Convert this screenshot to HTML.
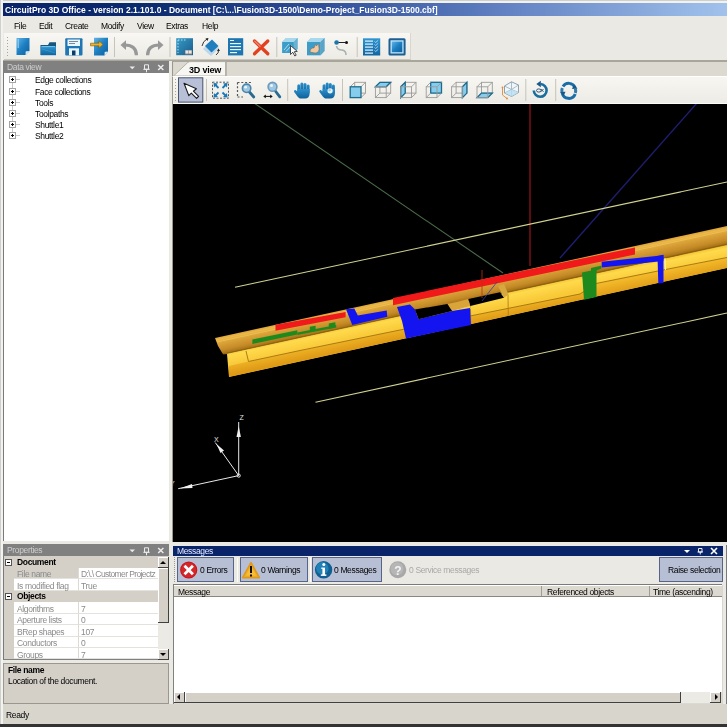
<!DOCTYPE html>
<html><head><meta charset="utf-8">
<style>
*{margin:0;padding:0;box-sizing:border-box}
html,body{width:727px;height:727px;overflow:hidden;background:#ebe9e3;font-family:"Liberation Sans",sans-serif;font-size:8.5px;letter-spacing:-0.35px;color:#000}
.a{position:absolute}
.t{position:absolute;white-space:nowrap;line-height:1;will-change:transform}
</style></head><body>
<!-- outer frame -->
<div class="a" style="left:0;top:0;width:727px;height:3px;background:#f2f2f0;border-top:1px solid #cfcfcc"></div>
<div class="a" style="left:0;top:0;width:3px;height:727px;background:#f2f2f0;border-left:1px solid #cfcfcc"></div>
<!-- title bar -->
<div class="a" style="left:3px;top:3px;width:724px;height:13px;background:linear-gradient(90deg,#0a246a 0%,#0c2a6e 20%,#2e4c94 42%,#5878bc 65%,#a2c2ec 100%)"></div>
<div class="t" style="left:5px;top:5.8px;font-weight:bold;color:#fff;font-size:8.5px;letter-spacing:0">CircuitPro 3D Office - version 2.1.101.0 - Document [C:\...\Fusion3D-1500\Demo-Project_Fusion3D-1500.cbf]</div>
<!-- menu -->
<div class="a" style="left:3px;top:16px;width:724px;height:16px;background:#ebe9e3"></div>
<div class="t" style="left:14px;top:21.7px">File</div>
<div class="t" style="left:39px;top:21.7px">Edit</div>
<div class="t" style="left:65px;top:21.7px">Create</div>
<div class="t" style="left:101px;top:21.7px">Modify</div>
<div class="t" style="left:137px;top:21.7px">View</div>
<div class="t" style="left:166px;top:21.7px">Extras</div>
<div class="t" style="left:202px;top:21.7px">Help</div>
<!-- toolbar -->
<div class="a" style="left:4px;top:33px;width:407px;height:27px;background:linear-gradient(#f8f7f3,#ecebe5);border-right:1px solid #d8d6cf;border-bottom:1px solid #c9c6bc"></div>
<div class="a" style="left:3px;top:60px;width:724px;height:1px;background:#a9a69c"></div>

<!-- main toolbar icons -->
<svg class="a" style="left:0;top:30px" width="420" height="31" viewBox="0 30 420 31">
<defs>
<linearGradient id="bl" x1="0" y1="0" x2="1" y2="1"><stop offset="0" stop-color="#5fb4e6"/><stop offset="0.5" stop-color="#1c7fc2"/><stop offset="1" stop-color="#0f5e9c"/></linearGradient>
<linearGradient id="bl2" x1="0" y1="0" x2="0" y2="1"><stop offset="0" stop-color="#2f96d2"/><stop offset="1" stop-color="#11659f"/></linearGradient>
<linearGradient id="tl" x1="0" y1="0" x2="1" y2="1"><stop offset="0" stop-color="#3a9cc8"/><stop offset="1" stop-color="#185c8a"/></linearGradient>
</defs>
<!-- grip -->
<g fill="#a8a59c">
<rect x="7" y="37" width="1" height="1"/><rect x="7" y="40" width="1" height="1"/><rect x="7" y="43" width="1" height="1"/><rect x="7" y="46" width="1" height="1"/><rect x="7" y="49" width="1" height="1"/><rect x="7" y="52" width="1" height="1"/><rect x="7" y="55" width="1" height="1"/>
</g>
<!-- new -->
<path d="M16.5,38 H29.5 V51 L25.5,55 H16.5 Z" fill="url(#bl)"/>
<path d="M25.5,55 L25.7,51.5 Q26,51 29.5,51 Z" fill="#d8f0ff"/>
<rect x="17.5" y="39" width="1.5" height="9" fill="#9bd4f4" opacity="0.7"/>
<!-- open folder -->
<path d="M40.5,45 H48 L49.5,42.3 H56 V55 H40.5 Z" fill="#16557e"/>
<path d="M40.8,46.3 H56 V55.2 H40.8 Z" fill="url(#bl2)"/>
<path d="M41.5,46.6 H55" stroke="#7fd0f4" stroke-width="0.9"/>
<path d="M42,49 L55,53" stroke="#4aa8e0" stroke-width="0.7" opacity="0.6"/>
<!-- save -->
<rect x="65.2" y="38.2" width="17.3" height="17.2" rx="1" fill="#1f76b4"/>
<rect x="67.5" y="39.5" width="12.5" height="6.5" fill="#e8f6ff"/>
<rect x="69" y="41" width="9" height="1" fill="#7a8a98"/><rect x="69" y="43" width="6" height="1" fill="#7a8a98"/>
<rect x="69" y="48.3" width="10" height="7" fill="#e8f6ff"/>
<rect x="72" y="50.5" width="3.5" height="4.8" fill="#0d3c66"/>
<!-- import -->
<path d="M94,37.8 H108 V51.5 L104.5,55.4 H94 Z" fill="url(#bl)"/>
<path d="M104.5,55.4 L104.7,52 Q105,51.5 108,51.5 Z" fill="#d8f0ff"/>
<path d="M90.5,43.2 H99 V40.8 L103,44.5 L99,48.2 V45.8 H90.5 Z" fill="#f0b020" stroke="#7a5a10" stroke-width="0.6"/>
<!-- sep -->
<rect x="114" y="37" width="1" height="20" fill="#c6c3ba"/>
<!-- undo/redo -->
<path d="M136.4,55.3 C136.4,48 132,45 124.5,45" stroke="#989898" stroke-width="3.2" fill="none"/>
<polygon points="120.5,45 126,40.3 126,50" fill="#989898"/>
<path d="M147.6,55.3 C147.6,48 152,45 159.5,45" stroke="#989898" stroke-width="3.2" fill="none"/>
<polygon points="163.5,45 158,40.3 158,50" fill="#989898"/>
<rect x="169.5" y="37" width="1" height="20" fill="#c6c3ba"/>
<!-- icon 7 -->
<rect x="176.2" y="38.2" width="16.8" height="17" fill="url(#tl)"/>
<path d="M178,40 V53 M178,40 H186" stroke="#a8e4f8" stroke-width="1" stroke-dasharray="1.5,1.5"/>
<rect x="185" y="50" width="7" height="4.5" fill="#8a8a8a"/><rect x="185.5" y="50.5" width="2.8" height="3" fill="#e8e8e8"/><rect x="188.8" y="50.5" width="2.8" height="3" fill="#e8e8e8"/>
<!-- icon 8 rotate -->
<path d="M203,49 L211,41 L219,48 L211,56 Z" fill="#9cc8e6" opacity="0.6"/>
<path d="M205,46 L212,39.5 L218.5,46 L211.5,52.5 Z" fill="#1f7fbf"/>
<path d="M202,46 Q203,41 207,39" stroke="#222" stroke-width="0.9" fill="none"/><polygon points="208.5,38 205.5,38.5 207.5,41" fill="#222"/>
<path d="M216,55 Q219,53 218.5,50" stroke="#222" stroke-width="0.9" fill="none"/><polygon points="218.5,48.5 217,51 220,51" fill="#222"/>
<!-- icon 9 list -->
<rect x="228" y="38.2" width="15.2" height="17.2" fill="#1d76b0"/>
<g fill="#e6f6ff"><rect x="230" y="40" width="4" height="1"/><rect x="230" y="43" width="11" height="1.2"/><rect x="230" y="46" width="11" height="1.2"/><rect x="230" y="49" width="11" height="1.2"/><rect x="230" y="52" width="7" height="1.2"/></g>
<!-- red x -->
<path d="M254.5,41 L267.8,53.8 M267.8,41 L254.5,53.8" stroke="#e2401e" stroke-width="3.3" stroke-linecap="round"/>
<path d="M254.8,41.3 L260,46.3" stroke="#f59a8a" stroke-width="1.5" stroke-linecap="round" opacity="0.7"/>
<rect x="276.3" y="37" width="1" height="20" fill="#c6c3ba"/>
<!-- cube cursor -->
<path d="M282.2,42 L286,38 H297.6 V49 L293.8,53 H282.2 Z" fill="#7cc0dc"/>
<rect x="282.2" y="42" width="11.6" height="11" fill="#3d9cc8"/>
<path d="M286,38 H297.6 L293.8,42 H282.2 Z" fill="#a8d8ec"/>
<path d="M293.8,42 L297.6,38 V49 L293.8,53 Z" fill="#6ab0d0"/>
<path d="M284,50 L289,44 M286,51.5 L291.5,45.5" stroke="#c8ecfa" stroke-width="0.8"/>
<path d="M290.5,45.5 L290.5,54.5 L292.8,52.3 L294.8,56 L296.2,55.2 L294.3,51.7 L297.3,51.4 Z" fill="#fff" stroke="#222" stroke-width="0.8"/>
<!-- cube hand -->
<path d="M307,42 L311,38 H324.5 V51 L320.5,55.2 H307 Z" fill="#7cc0dc"/>
<rect x="307" y="42" width="13.5" height="13.2" fill="#3d9cc8"/>
<path d="M311,38 H324.5 L320.5,42 H307 Z" fill="#a8d8ec"/>
<path d="M320.5,42 L324.5,38 V51 L320.5,55.2 Z" fill="#5aa4c8"/>
<path d="M310,52 C310,49 312,47.5 314,48 L315,45.5 C315.5,44.5 316.8,44.8 316.5,46 L317.5,44.5 C318,43.8 319,44.2 318.6,45.2 L319,48 C319.5,50.5 318,53 315,53 Z" fill="#f2c8a0" stroke="#8a6040" stroke-width="0.5"/>
<!-- path icon -->
<path d="M336.6,46 Q337,50 342,50 Q346,50.5 346,55" stroke="#a8b0b0" stroke-width="1.6" fill="none"/>
<line x1="337" y1="42.5" x2="345" y2="42.5" stroke="#222" stroke-width="1"/>
<circle cx="336.6" cy="42.5" r="2.3" fill="#1d76a8"/>
<circle cx="346.5" cy="42.5" r="1.5" fill="#111"/>
<rect x="356.7" y="37" width="1" height="20" fill="#c6c3ba"/>
<!-- checklist -->
<rect x="363" y="38.3" width="17.2" height="17.2" fill="url(#bl2)"/>
<g fill="#e6f6ff"><rect x="365" y="40.5" width="8" height="1.2"/><rect x="365" y="43.5" width="8" height="1.2"/><rect x="365" y="46.5" width="8" height="1.2"/><rect x="365" y="49.5" width="8" height="1.2"/><rect x="365" y="52.5" width="8" height="1.2"/></g>
<path d="M374.5,41.5 l1.2,1 l2.5,-2.2 M374.5,44.5 l1.2,1 l2.5,-2.2 M374.5,47.5 l1.2,1 l2.5,-2.2 M374.5,50.5 l1.2,1 l2.5,-2.2" stroke="#d8f0ff" stroke-width="0.7" fill="none"/>
<!-- frame -->
<rect x="388.5" y="38.3" width="17.1" height="17.2" rx="1.5" fill="#1e5e92"/>
<rect x="390.5" y="40.3" width="13.1" height="13.2" fill="#bfe6fa" />
<rect x="391.8" y="41.6" width="10.5" height="10.6" fill="url(#bl)"/>
</svg>
<!-- Data view panel -->
<div class="a" style="left:3px;top:61px;width:166px;height:12px;background:#808080"></div>
<div class="t" style="left:7px;top:63px;color:#cdcdcd">Data view</div>
<svg class="a" style="left:125px;top:61px" width="44" height="12" viewBox="125 61 44 12">
<polygon points="129.5,66.5 135,66.5 132.25,69.3" fill="#ececec"/>
<path d="M144.5,64.8 h4 v4.5 h-4z M143.3,69.3 h6.4 M146.5,69.3 v3" stroke="#ececec" stroke-width="1" fill="none"/>
<path d="M158.2,65 l5.2,5 M163.4,65 l-5.2,5" stroke="#ececec" stroke-width="1.5"/>
</svg>

<div class="a" style="left:3px;top:73px;width:166px;height:468px;background:#fff;border-left:1px solid #7a7a7a"></div>
<div class="a" style="left:169px;top:61px;width:3px;height:481px;background:#ebe9e3"></div>
<!-- tree -->
<div class="a" style="left:9px;top:76.4px;width:7px;height:7px;border:1px solid #a4a4a4;background:#fff"></div><div class="a" style="left:11px;top:79.4px;width:3px;height:1px;background:#000"></div><div class="a" style="left:12px;top:78.4px;width:1px;height:3px;background:#000"></div><div class="a" style="left:16px;top:79.4px;width:4px;height:1px;background:#c8c8c8"></div><div class="a" style="left:12px;top:83.4px;width:1px;height:4.2px;background:#c8c8c8"></div><div class="t" style="left:35px;top:76.4px">Edge collections</div>
<div class="a" style="left:9px;top:87.6px;width:7px;height:7px;border:1px solid #a4a4a4;background:#fff"></div><div class="a" style="left:11px;top:90.6px;width:3px;height:1px;background:#000"></div><div class="a" style="left:12px;top:89.6px;width:1px;height:3px;background:#000"></div><div class="a" style="left:16px;top:90.6px;width:4px;height:1px;background:#c8c8c8"></div><div class="a" style="left:12px;top:94.6px;width:1px;height:4.2px;background:#c8c8c8"></div><div class="t" style="left:35px;top:87.6px">Face collections</div>
<div class="a" style="left:9px;top:98.8px;width:7px;height:7px;border:1px solid #a4a4a4;background:#fff"></div><div class="a" style="left:11px;top:101.8px;width:3px;height:1px;background:#000"></div><div class="a" style="left:12px;top:100.8px;width:1px;height:3px;background:#000"></div><div class="a" style="left:16px;top:101.8px;width:4px;height:1px;background:#c8c8c8"></div><div class="a" style="left:12px;top:105.8px;width:1px;height:4.2px;background:#c8c8c8"></div><div class="t" style="left:35px;top:98.8px">Tools</div>
<div class="a" style="left:9px;top:110.0px;width:7px;height:7px;border:1px solid #a4a4a4;background:#fff"></div><div class="a" style="left:11px;top:113.0px;width:3px;height:1px;background:#000"></div><div class="a" style="left:12px;top:112.0px;width:1px;height:3px;background:#000"></div><div class="a" style="left:16px;top:113.0px;width:4px;height:1px;background:#c8c8c8"></div><div class="a" style="left:12px;top:117.0px;width:1px;height:4.2px;background:#c8c8c8"></div><div class="t" style="left:35px;top:110.0px">Toolpaths</div>
<div class="a" style="left:9px;top:121.2px;width:7px;height:7px;border:1px solid #a4a4a4;background:#fff"></div><div class="a" style="left:11px;top:124.2px;width:3px;height:1px;background:#000"></div><div class="a" style="left:12px;top:123.2px;width:1px;height:3px;background:#000"></div><div class="a" style="left:16px;top:124.2px;width:4px;height:1px;background:#c8c8c8"></div><div class="a" style="left:12px;top:128.2px;width:1px;height:4.2px;background:#c8c8c8"></div><div class="t" style="left:35px;top:121.2px">Shuttle1</div>
<div class="a" style="left:9px;top:132.4px;width:7px;height:7px;border:1px solid #a4a4a4;background:#fff"></div><div class="a" style="left:11px;top:135.4px;width:3px;height:1px;background:#000"></div><div class="a" style="left:12px;top:134.4px;width:1px;height:3px;background:#000"></div><div class="a" style="left:16px;top:135.4px;width:4px;height:1px;background:#c8c8c8"></div><div class="t" style="left:35px;top:132.4px">Shuttle2</div>


<!-- 3D panel -->
<div class="a" style="left:172px;top:61px;width:555px;height:15px;background:#d9d6cd;border-left:1px solid #9a978e;border-top:1px solid #a8a59b"></div>
<svg class="a" style="left:172px;top:61px" width="60" height="16" viewBox="172 61 60 16">
<path d="M173.5,76 L188,62.3 Q189.5,61.6 191,61.6 H225.5 V76 Z" fill="#f7f6f2" stroke="#a8a59b" stroke-width="0.8"/>
<path d="M174,62 L187,62 L174,75 Z" fill="#dedbd2" opacity="0.6"/>
</svg>
<div class="a" style="left:226px;top:62px;width:501px;height:14px;background:#dcd9d0;border-left:1px solid #b8b5ac"></div>
<div class="t" style="left:189.3px;top:66.2px;font-weight:bold;font-size:9px;letter-spacing:-0.2px">3D view</div>
<div class="a" style="left:172px;top:76px;width:555px;height:27px;background:linear-gradient(#f7f6f2,#edebe5);border-left:1px solid #9a978e;border-top:1px solid #fff"></div>
<svg class="a" style="left:172px;top:76px" width="555" height="27" viewBox="172 76 555 27">
<defs>
<linearGradient id="hb" x1="0" y1="0" x2="0" y2="1"><stop offset="0" stop-color="#2a90cc"/><stop offset="1" stop-color="#0f5f98"/></linearGradient>
</defs>
<g fill="#a8a59c"><rect x="175" y="79" width="1" height="1"/><rect x="175" y="82" width="1" height="1"/><rect x="175" y="85" width="1" height="1"/><rect x="175" y="88" width="1" height="1"/><rect x="175" y="91" width="1" height="1"/><rect x="175" y="94" width="1" height="1"/><rect x="175" y="97" width="1" height="1"/><rect x="175" y="100" width="1" height="1"/></g>
<rect x="178.5" y="77.8" width="24.3" height="24.3" fill="#b8c0d8" stroke="#46546e" stroke-width="1"/>
<path d="M184,83.2 L196.4,88.8 L193.4,91.2 L198.6,96.4 L196.6,98.4 L191.3,93.2 L188.8,95.6 Z" fill="#fff" stroke="#1a1a1a" stroke-width="1.1" stroke-linejoin="round"/>
<rect x="206" y="79" width="1" height="22" fill="#c6c3ba"/>
<!-- fit -->
<rect x="212.5" y="82.2" width="16" height="16" fill="none" stroke="#555" stroke-width="1" stroke-dasharray="2,1.5"/>
<g stroke="#1a78b8" stroke-width="1.8" fill="#1a78b8">
<path d="M218.5,88 L214.5,84"/><path d="M222.5,88 L226.5,84"/><path d="M218.5,92.5 L214.5,96.5"/><path d="M222.5,92.5 L226.5,96.5"/>
</g>
<g fill="#1a78b8"><polygon points="213.5,83 218,83.5 214,87.5"/><polygon points="227.5,83 223,83.5 227,87.5"/><polygon points="213.5,97.5 218,97 214,93"/><polygon points="227.5,97.5 223,97 227,93"/></g>
<!-- zoom window -->
<path d="M237.5,82.5 V97 M237.5,82.5 H251 M237.5,97 H243" stroke="#555" stroke-width="1.2" stroke-dasharray="2,1.8" fill="none"/>
<path d="M249,91.5 L253.8,97" stroke="#2a6a90" stroke-width="2.8" stroke-linecap="round"/>
<circle cx="246.6" cy="88.3" r="4.2" fill="#9cc8e4" stroke="#4f84a8" stroke-width="1.6"/>
<circle cx="245.6" cy="87.2" r="1.4" fill="#e8f6ff"/>
<!-- zoom -->
<path d="M275,90.5 L279.8,96.8" stroke="#2a6a90" stroke-width="2.8" stroke-linecap="round"/>
<circle cx="272.5" cy="86.8" r="4.4" fill="#9cc8e4" stroke="#6f9ab8" stroke-width="1.6"/>
<circle cx="271.5" cy="85.6" r="1.5" fill="#e8f6ff"/>
<path d="M264.5,96.4 H271.5" stroke="#111" stroke-width="1"/>
<polygon points="263.3,96.4 265.8,94.6 265.8,98.2" fill="#111"/><polygon points="272.7,96.4 270.2,94.6 270.2,98.2" fill="#111"/>
<rect x="287.2" y="79" width="1" height="22" fill="#c6c3ba"/>
<!-- hands -->
<g transform="translate(0.0,0)" fill="url(#hb)"><rect x="297.3" y="84.2" width="3" height="9" rx="1.5"/><rect x="300.4" y="82.6" width="3" height="10" rx="1.5"/><rect x="303.5" y="83" width="3" height="10" rx="1.5"/><rect x="306.6" y="84.6" width="3" height="9" rx="1.5"/><path d="M297.3,89 H309.6 V93.5 C309.6,96.5 308,98.6 305,98.6 H301 C299.5,98.6 298.5,97.8 297.5,96.5 L294.2,92 C293.5,91 294.5,89.6 295.8,90.2 L297.5,91.5 Z"/></g>
<g transform="translate(25.3,0)" fill="url(#hb)"><rect x="297.3" y="84.2" width="3" height="9" rx="1.5"/><rect x="300.4" y="82.6" width="3" height="10" rx="1.5"/><rect x="303.5" y="83" width="3" height="10" rx="1.5"/><rect x="306.6" y="84.6" width="3" height="9" rx="1.5"/><path d="M297.3,89 H309.6 V93.5 C309.6,96.5 308,98.6 305,98.6 H301 C299.5,98.6 298.5,97.8 297.5,96.5 L294.2,92 C293.5,91 294.5,89.6 295.8,90.2 L297.5,91.5 Z"/><circle cx="304.8" cy="90.8" r="2.6" fill="#e4f4fb"/><circle cx="304.3" cy="90.3" r="1.2" fill="#a8d0e4"/></g>
<rect x="342" y="79" width="1" height="22" fill="#c6c3ba"/>
<rect x="354.7" y="82.3" width="10.8" height="10.8" fill="none" stroke="#9a9a9a" stroke-width="0.9"/><path d="M350.2,86.8 L354.7,82.3 M361.0,86.8 L365.5,82.3 M361.0,97.6 L365.5,93.1 M350.2,97.6 L354.7,93.1" stroke="#9a9a9a" stroke-width="0.9"/><rect x="350.2" y="86.8" width="10.8" height="10.8" fill="#86ccec" stroke="#1d6a8c" stroke-width="1.3"/>
<rect x="379.9" y="82.3" width="10.8" height="10.8" fill="none" stroke="#9a9a9a" stroke-width="0.9"/><path d="M375.4,86.8 L379.9,82.3 M386.2,86.8 L390.7,82.3 M386.2,97.6 L390.7,93.1 M375.4,97.6 L379.9,93.1" stroke="#9a9a9a" stroke-width="0.9"/><polygon points="375.4,86.8 379.9,82.3 390.7,82.3 386.2,86.8" fill="#86ccec" stroke="#1d6a8c" stroke-width="1.3"/><rect x="375.4" y="86.8" width="10.8" height="10.8" fill="none" stroke="#9a9a9a" stroke-width="0.9"/>
<rect x="405.2" y="82.3" width="10.8" height="10.8" fill="none" stroke="#9a9a9a" stroke-width="0.9"/><path d="M400.7,86.8 L405.2,82.3 M411.5,86.8 L416.0,82.3 M411.5,97.6 L416.0,93.1 M400.7,97.6 L405.2,93.1" stroke="#9a9a9a" stroke-width="0.9"/><polygon points="400.7,86.8 405.2,82.3 405.2,93.1 400.7,97.6" fill="#86ccec" stroke="#1d6a8c" stroke-width="1.3"/><rect x="400.7" y="86.8" width="10.8" height="10.8" fill="none" stroke="#9a9a9a" stroke-width="0.9"/>
<rect x="430.7" y="82.3" width="10.8" height="10.8" fill="#86ccec" stroke="#1d6a8c" stroke-width="1.3"/><path d="M426.2,86.8 L430.7,82.3 M437.0,86.8 L441.5,82.3 M437.0,97.6 L441.5,93.1 M426.2,97.6 L430.7,93.1" stroke="#9a9a9a" stroke-width="0.9"/><rect x="426.2" y="86.8" width="10.8" height="10.8" fill="none" stroke="#9a9a9a" stroke-width="0.9"/>
<rect x="456.1" y="82.3" width="10.8" height="10.8" fill="none" stroke="#9a9a9a" stroke-width="0.9"/><path d="M451.6,86.8 L456.1,82.3 M462.40000000000003,86.8 L466.90000000000003,82.3 M462.40000000000003,97.6 L466.90000000000003,93.1 M451.6,97.6 L456.1,93.1" stroke="#9a9a9a" stroke-width="0.9"/><polygon points="462.40000000000003,86.8 466.90000000000003,82.3 466.90000000000003,93.1 462.40000000000003,97.6" fill="#86ccec" stroke="#1d6a8c" stroke-width="1.3"/><rect x="451.6" y="86.8" width="10.8" height="10.8" fill="none" stroke="#9a9a9a" stroke-width="0.9"/>
<rect x="481.5" y="82.3" width="10.8" height="10.8" fill="none" stroke="#9a9a9a" stroke-width="0.9"/><path d="M477.0,86.8 L481.5,82.3 M487.8,86.8 L492.3,82.3 M487.8,97.6 L492.3,93.1 M477.0,97.6 L481.5,93.1" stroke="#9a9a9a" stroke-width="0.9"/><polygon points="477.0,97.6 481.5,93.1 492.3,93.1 487.8,97.6" fill="#86ccec" stroke="#1d6a8c" stroke-width="1.3"/><rect x="477.0" y="86.8" width="10.8" height="10.8" fill="none" stroke="#9a9a9a" stroke-width="0.9"/>
<!-- iso cube -->
<path d="M504.5,86 L511.5,81.8 L518.5,85 L518.5,92.5 L511.5,96.5 L504.5,93 Z" fill="#eef6fa" stroke="#8696a0" stroke-width="0.9"/>
<path d="M504.5,86 L511.5,89.5 L518.5,85 M511.5,89.5 V96.5 M504.5,93 L511.5,89.5 M511.5,81.8 V89.5 M518.5,92.5 L511.5,89.5" stroke="#8fa4b0" stroke-width="0.7" fill="none"/>
<path d="M504.5,93 L511.5,96.5 L518.5,92.5 L511.5,89.5 Z" fill="#b8e0f2" opacity="0.8"/>
<path d="M502.5,87.5 V95 L507,98.5" stroke="#e08a3a" stroke-width="0.9" fill="none"/>
<circle cx="502.5" cy="87.5" r="0.9" fill="#e08a3a"/><circle cx="507" cy="98.5" r="0.9" fill="#e08a3a"/>
<rect x="525.3" y="79" width="1" height="22" fill="#c6c3ba"/>
<!-- rotate -->
<path d="M533.8,90.5 A6.4,6.4 0 1 0 540.5,84" stroke="#1a6e9e" stroke-width="2.6" fill="none"/>
<polygon points="536.3,84 540.8,80.8 540.8,87.2" fill="#1a5a88"/>
<ellipse cx="538.8" cy="90.5" rx="2.3" ry="1.6" fill="none" stroke="#1a4a70" stroke-width="0.9"/>
<path d="M540.8,89 L543.5,91.8 M540.8,91.8 L543.5,89" stroke="#1a4a70" stroke-width="0.9"/>
<rect x="555.2" y="79" width="1" height="22" fill="#c6c3ba"/>
<!-- refresh -->
<path d="M563,86.5 A6.8,6.8 0 0 1 575,87.5" stroke="#1a6ea8" stroke-width="3" fill="none"/>
<path d="M575.2,94 A6.8,6.8 0 0 1 562.2,93" stroke="#1a6ea8" stroke-width="3" fill="none"/>
<path d="M562,92 A6.8,6.8 0 0 1 562.3,88" stroke="#1a6ea8" stroke-width="3" fill="none" opacity="0.9"/>
<path d="M575.3,88.5 A6.8,6.8 0 0 1 575.3,93" stroke="#1a6ea8" stroke-width="3" fill="none" opacity="0.9"/>
<polygon points="574,84.5 577.5,88.5 572,89" fill="#15588a"/>
<polygon points="563.5,96 560,92 565.5,91.8" fill="#15588a"/>
</svg>
<div class="a" style="left:172px;top:103px;width:555px;height:1px;background:#fbfbf8;border-left:1px solid #9a978e"></div>
<div class="a" style="left:172px;top:104px;width:555px;height:438px;background:#000;border-left:1px solid #9a978e"></div>
<!-- 3D scene -->
<svg class="a" style="left:173px;top:104px" width="554" height="438" viewBox="173 104 554 438">
<defs>
<linearGradient id="topf" gradientUnits="userSpaceOnUse" x1="470" y1="282.1" x2="473.85" y2="299.75">
<stop offset="0" stop-color="#d9a23a"/>
<stop offset="0.14" stop-color="#ecba4a"/>
<stop offset="0.3" stop-color="#dea63c"/>
<stop offset="0.5" stop-color="#d39a32"/>
<stop offset="0.75" stop-color="#c48a28"/>
<stop offset="0.92" stop-color="#ae7618"/>
<stop offset="1" stop-color="#885a0e"/>
</linearGradient>
<linearGradient id="cyl" gradientUnits="userSpaceOnUse" x1="470" y1="300" x2="473" y2="314">
<stop offset="0" stop-color="#f4c434"/>
<stop offset="0.25" stop-color="#ffda4c"/>
<stop offset="1" stop-color="#f8c838"/>
</linearGradient>
<linearGradient id="low" gradientUnits="userSpaceOnUse" x1="470" y1="312" x2="472.5" y2="324">
<stop offset="0" stop-color="#f2b82a"/>
<stop offset="1" stop-color="#df9a16"/>
</linearGradient>
<clipPath id="tubeclip"><polygon points="215,338 727,226 727,268 229,377 227,354 218,346"/></clipPath>
</defs>
<!-- axis lines -->
<line x1="254" y1="103" x2="503" y2="273" stroke="#4a6a48" stroke-width="1.1"/>
<line x1="530" y1="103" x2="530" y2="266" stroke="#a81818" stroke-width="1.1"/>
<line x1="697" y1="103" x2="560" y2="258" stroke="#1e1e72" stroke-width="1.4"/>
<line x1="235" y1="287.3" x2="727" y2="182" stroke="#d2d290" stroke-width="1.1"/>
<line x1="315.5" y1="402.2" x2="727" y2="313" stroke="#d2d290" stroke-width="1.1"/>
<!-- tube -->
<polygon points="215,338 727,226 727,244.6 223,354.2 218,346" fill="url(#topf)"/>
<polygon points="223,354.2 727,244.6 727,268 229,377 227,354" fill="url(#cyl)"/>
<g clip-path="url(#tubeclip)">
<polygon points="248.5,361.5 300,350.5 400,330 580,294 596,283.5 660,270.6 727,257.5 727,268 229,377 229,366" fill="url(#low)"/>
<polyline points="246,351 248.5,361.5 300,350.5 400,330 580,294 596,283.5 660,270.6 727,257.5" fill="none" stroke="#a07412" stroke-width="0.9"/>
<line x1="223" y1="354.2" x2="727" y2="244.6" stroke="#8c6414" stroke-width="0.8"/>
<line x1="217" y1="342" x2="727" y2="230.5" stroke="#f4cc60" stroke-width="0.8" opacity="0.7"/>
<!-- segment lines -->
<g stroke="#a87818" stroke-width="0.8">
<line x1="470.4" y1="305" x2="470.8" y2="325"/>
<line x1="508" y1="294.5" x2="508.3" y2="316"/>
<line x1="415" y1="310" x2="417" y2="336"/>
</g>
<polygon points="498,286 504,284 508.5,294.5 504,297.8" fill="#d8a840"/>
<polygon points="452.2,311 447.4,304 457,302 468,299 470.3,306" fill="#d9a43a"/>
<polygon points="452.2,311 470.3,306 470.8,309 454,313" fill="#f6d050"/>
</g>
<!-- red -->
<polygon points="275.5,324.8 345.6,312 345.6,317.3 275.5,330.8" fill="#f01a1a"/>
<polygon points="393,298 635,247.5 635,254.5 393,305.2" fill="#f01a1a"/>
<!-- green -->
<polygon points="252.4,339.6 297.4,330.2 297.4,334.6 252.4,344.1" fill="#1e8a1e"/>
<polygon points="297.4,332.4 336.2,325.1 336.2,327.6 297.4,335" fill="#1e8a1e"/>
<polygon points="309.8,326.8 315.6,325.7 315.6,330.6 309.8,331.7" fill="#1e8a1e"/>
<polygon points="328.8,323.5 335.4,322.2 335.4,327.6 328.8,328.9" fill="#1e8a1e"/>
<polygon points="582,272.5 596.5,269.5 596.5,297 584,299.8" fill="#1e8a1e"/>
<polygon points="591,268 601,265.8 601.5,268.5 596.5,270.5 596.5,272 591,273" fill="#1e8a1e"/>
<!-- blue -->
<polygon points="346,309.3 354.3,308.6 357.8,315.4 386.7,310.6 387.3,316.8 352.3,325" fill="#1414f0"/>
<polygon points="397,307 410,304.5 415,309.6 418.5,319.2 452,311 470,308 471,325 406,338.5 402,321" fill="#1414f0"/>
<polygon points="601.7,261.7 663.4,255.3 663.4,261 601.7,267.5" fill="#1414f0"/>
<polygon points="657.5,256 663.5,254.8 663.5,283 658.3,283.5" fill="#1414f0"/><line x1="665" y1="258" x2="665.5" y2="270" stroke="#fff4c0" stroke-width="1"/>
<!-- holes -->
<polygon points="415,309.6 447.4,304 452.2,311 418.5,319.2" fill="#000"/>
<polygon points="468.4,299 500,292.3 504,297.8 470.3,306" fill="#000"/>
<line x1="482" y1="270" x2="482" y2="298" stroke="#b83018" stroke-width="0.8"/>
<line x1="497" y1="282" x2="482" y2="301" stroke="#3a3ab0" stroke-width="0.8"/>
<!-- axis triad -->
<g stroke="#e8e8e8" stroke-width="1" fill="#f0f0f0">
<line x1="238.7" y1="475.6" x2="238.7" y2="422"/>
<polygon points="236.5,437 238.7,426 240.9,437" stroke="none"/>
<line x1="238.7" y1="475.6" x2="215.3" y2="442.6"/>
<polygon points="216.5,444 224,450.5 220.5,453" stroke="none"/>
<line x1="238.7" y1="475.6" x2="178.2" y2="488.7"/>
<polygon points="180,488.5 192,484 192.5,488" stroke="none"/>
<circle cx="238.7" cy="475.6" r="1.6" fill="none"/>
</g>
<g fill="#e0e0e0" font-family="Liberation Sans" font-size="7">
<text x="239.5" y="419.5">Z</text>
<text x="214" y="442">X</text>
<text x="170" y="485.5">Y</text>
</g>
</svg>
<!-- bottom area -->
<div class="a" style="left:3px;top:542px;width:724px;height:185px;background:#ebe9e3"></div>
<!-- Properties -->
<div class="a" style="left:3px;top:544px;width:166px;height:12px;background:#808080"></div>
<div class="t" style="left:7px;top:546px;color:#cdcdcd">Properties</div>
<svg class="a" style="left:125px;top:544px" width="44" height="12" viewBox="125 544 44 12">
<polygon points="129.5,549.5 135,549.5 132.25,552.3" fill="#ececec"/>
<path d="M144.5,547.8 h4 v4.5 h-4z M143.3,552.3 h6.4 M146.5,552.3 v3" stroke="#ececec" stroke-width="1" fill="none"/>
<path d="M158.2,548 l5.2,5 M163.4,548 l-5.2,5" stroke="#ececec" stroke-width="1.5"/>
</svg>

<div class="a" style="left:3px;top:556px;width:166px;height:104px;background:#d4d0c8;border-left:1px solid #7a7a7a;border-bottom:1px solid #808080"></div>
<div class="a" style="left:5px;top:558.5px;width:7px;height:7px;border:1px solid #555;background:#fff"></div><div class="a" style="left:7px;top:561.5px;width:3px;height:1px;background:#000"></div><div class="t" style="left:17px;top:557.5px;font-weight:bold;font-size:8.5px">Document</div>
<div class="a" style="left:14px;top:567.8px;width:64px;height:11.5px;background:#d4d0c8;border-bottom:1px solid #e4e2dc"></div><div class="a" style="left:78px;top:567.8px;width:79.5px;height:11.5px;background:#fff;border-left:1px solid #dcdad2;border-bottom:1px solid #e4e2dc"></div><div class="t" style="left:17px;top:569.9px;color:#8a8a8a">File name</div><div class="t" style="left:80.8px;top:569.9px;color:#8a8a8a;letter-spacing:-0.6px">D:\.\ Customer Projectz</div>
<div class="a" style="left:14px;top:579.3px;width:64px;height:11.5px;background:#fff;border-bottom:1px solid #e4e2dc"></div><div class="a" style="left:78px;top:579.3px;width:79.5px;height:11.5px;background:#fff;border-left:1px solid #dcdad2;border-bottom:1px solid #e4e2dc"></div><div class="t" style="left:17px;top:581.5px;color:#8a8a8a">Is modified flag</div><div class="t" style="left:80.8px;top:581.5px;color:#8a8a8a">True</div>
<div class="a" style="left:5px;top:593.0px;width:7px;height:7px;border:1px solid #555;background:#fff"></div><div class="a" style="left:7px;top:596.0px;width:3px;height:1px;background:#000"></div><div class="t" style="left:17px;top:592.0px;font-weight:bold;font-size:8.5px">Objects</div>
<div class="a" style="left:14px;top:602.3px;width:64px;height:11.5px;background:#fff;border-bottom:1px solid #e4e2dc"></div><div class="a" style="left:78px;top:602.3px;width:79.5px;height:11.5px;background:#fff;border-left:1px solid #dcdad2;border-bottom:1px solid #e4e2dc"></div><div class="t" style="left:17px;top:604.5px;color:#8a8a8a">Algorithms</div><div class="t" style="left:80.8px;top:604.5px;color:#8a8a8a">7</div>
<div class="a" style="left:14px;top:613.8px;width:64px;height:11.5px;background:#fff;border-bottom:1px solid #e4e2dc"></div><div class="a" style="left:78px;top:613.8px;width:79.5px;height:11.5px;background:#fff;border-left:1px solid #dcdad2;border-bottom:1px solid #e4e2dc"></div><div class="t" style="left:17px;top:615.9px;color:#8a8a8a">Aperture lists</div><div class="t" style="left:80.8px;top:615.9px;color:#8a8a8a">0</div>
<div class="a" style="left:14px;top:625.3px;width:64px;height:11.5px;background:#fff;border-bottom:1px solid #e4e2dc"></div><div class="a" style="left:78px;top:625.3px;width:79.5px;height:11.5px;background:#fff;border-left:1px solid #dcdad2;border-bottom:1px solid #e4e2dc"></div><div class="t" style="left:17px;top:627.5px;color:#8a8a8a">BRep shapes</div><div class="t" style="left:80.8px;top:627.5px;color:#8a8a8a">107</div>
<div class="a" style="left:14px;top:636.8px;width:64px;height:11.5px;background:#fff;border-bottom:1px solid #e4e2dc"></div><div class="a" style="left:78px;top:636.8px;width:79.5px;height:11.5px;background:#fff;border-left:1px solid #dcdad2;border-bottom:1px solid #e4e2dc"></div><div class="t" style="left:17px;top:638.9px;color:#8a8a8a">Conductors</div><div class="t" style="left:80.8px;top:638.9px;color:#8a8a8a">0</div>
<div class="a" style="left:14px;top:648.3px;width:64px;height:11.1px;background:#fff;border-bottom:1px solid #e4e2dc"></div><div class="a" style="left:78px;top:648.3px;width:79.5px;height:11.1px;background:#fff;border-left:1px solid #dcdad2;border-bottom:1px solid #e4e2dc"></div><div class="t" style="left:17px;top:650.5px;color:#8a8a8a">Groups</div><div class="t" style="left:80.8px;top:650.5px;color:#8a8a8a">7</div>
<div class="a" style="left:157.5px;top:556.5px;width:11px;height:103px;background:#eceae4"></div>
<div class="a" style="left:157.5px;top:556.5px;width:11px;height:11px;background:#d4d0c8;border-right:1px solid #404040;border-bottom:1px solid #404040;box-shadow:inset 1px 1px 0 #fff"></div>
<div class="a" style="left:160px;top:560.5px;width:0;height:0;border-left:3px solid transparent;border-right:3px solid transparent;border-bottom:3px solid #000"></div>
<div class="a" style="left:157.5px;top:567.5px;width:11px;height:55.5px;background:#d4d0c8;border-right:1px solid #404040;border-bottom:1px solid #404040;box-shadow:inset 1px 1px 0 #fff"></div>
<div class="a" style="left:157.5px;top:648.5px;width:11px;height:11px;background:#d4d0c8;border-right:1px solid #404040;border-bottom:1px solid #404040;box-shadow:inset 1px 1px 0 #fff"></div>
<div class="a" style="left:160px;top:652.5px;width:0;height:0;border-left:3px solid transparent;border-right:3px solid transparent;border-top:3px solid #000"></div>
<!-- help -->
<div class="a" style="left:3px;top:663px;width:166px;height:41px;background:#d4d0c8;border:1px solid #9a978e"></div>
<div class="t" style="left:7.5px;top:666px;font-weight:bold;font-size:8.5px">File name</div>
<div class="t" style="left:7.5px;top:676.5px">Location of the document.</div>
<!-- Messages -->
<div class="a" style="left:172.5px;top:545.8px;width:550px;height:10px;background:#0a246a"></div>
<div class="t" style="left:177px;top:547px;color:#e4eaff">Messages</div>
<svg class="a" style="left:680px;top:546px" width="42" height="10" viewBox="0 0 42 10">
<polygon points="4,4 10,4 7,7" fill="#fff"/>
<path d="M18.5,2.5 h3.5 v3.5 h-3.5z M20.25,6 v2.5 M17.5,6 h5.5" stroke="#fff" stroke-width="0.9" fill="none"/>
<path d="M31,2 l6,6 M37,2 l-6,6" stroke="#fff" stroke-width="1.6"/>
</svg>
<div class="a" style="left:173.5px;top:557px;width:1px;height:25px;border-left:1px dotted #9a9a9a"></div>
<div class="a" style="left:177.2px;top:557.4px;width:57.2px;height:24.8px;background:#b7bfd5;border:1px solid #56648a"></div><div class="t" style="left:199.7px;top:565.8px;color:#000">0 Errors</div>
<div class="a" style="left:239.6px;top:557.4px;width:68.1px;height:24.8px;background:#b7bfd5;border:1px solid #56648a"></div><div class="t" style="left:261px;top:565.8px;color:#000">0 Warnings</div>
<div class="a" style="left:312.4px;top:557.4px;width:69.3px;height:24.8px;background:#b7bfd5;border:1px solid #56648a"></div><div class="t" style="left:334.2px;top:565.8px;color:#000">0 Messages</div>
<div class="a" style="left:236.7px;top:558px;width:1.5px;height:24px;background:#fbfbfb"></div><div class="a" style="left:309.8px;top:558px;width:1.5px;height:24px;background:#fbfbfb"></div>
<svg class="a" style="left:178px;top:559px" width="230" height="22" viewBox="178 559 230 22">
<circle cx="188.7" cy="570" r="8.6" fill="#c8151b"/>
<circle cx="188.7" cy="570" r="7.6" fill="#e03a3a" opacity="0.5"/>
<path d="M184.5,565.8 l8.4,8.4 M192.9,565.8 l-8.4,8.4" stroke="#fff" stroke-width="2.8"/>
<polygon points="251,562.6 259.4,577.6 242.6,577.6" fill="#f2ae26" stroke="#e09a18" stroke-width="1.6" stroke-linejoin="round"/><polygon points="251,566 256,575.5 246,575.5" fill="#f8c848" opacity="0.6"/>
<path d="M251,566 v7" stroke="#111" stroke-width="2"/>
<rect x="250" y="574.5" width="2" height="2" fill="#111"/>
<circle cx="323.6" cy="569.8" r="8.7" fill="#0f5f92"/>
<circle cx="322.3" cy="568.3" r="6.2" fill="#2a90c8" opacity="0.7"/>
<rect x="322.4" y="567.6" width="2.6" height="7.4" fill="#fff"/>
<rect x="321.2" y="567.6" width="1.6" height="1.2" fill="#fff"/>
<circle cx="323.8" cy="564.6" r="1.5" fill="#fff"/>
<rect x="320.8" y="574.4" width="5.6" height="1.5" fill="#fff"/>
<circle cx="397.8" cy="569.8" r="8.5" fill="#a8a8a8"/><circle cx="397" cy="568.8" r="6.5" fill="#c0c0c0" opacity="0.6"/>
<text x="394.2" y="574.6" font-family="Liberation Sans" font-weight="bold" font-size="12" fill="#f4f4f4">?</text>
</svg>
<div class="t" style="left:408.5px;top:565.8px;color:#a8a8a8">0 Service messages</div>
<div class="a" style="left:659px;top:557.2px;width:63.5px;height:25.2px;background:#b7bfd5;border:1px solid #56648a"></div>
<div class="t" style="left:667.8px;top:565.8px">Raise selection</div>
<!-- list -->
<div class="a" style="left:172.5px;top:584px;width:549.5px;height:119.5px;background:#fff;border-left:1px solid #808080;border-top:1.5px solid #7a7a7a"></div>
<div class="a" style="left:173.5px;top:585.5px;width:548.5px;height:11.5px;background:#dcd9d0;border-bottom:1.5px solid #8a877e"></div>
<div class="a" style="left:541px;top:586px;width:1px;height:10px;background:#a09d94"></div>
<div class="a" style="left:649px;top:586px;width:1px;height:10px;background:#a09d94"></div>
<div class="t" style="left:178.3px;top:588.2px">Message</div>
<div class="t" style="left:546.8px;top:588.2px">Referenced objects</div>
<div class="t" style="left:653.3px;top:588.2px">Time (ascending)</div>
<!-- hscroll -->
<div class="a" style="left:173.5px;top:691.5px;width:548.5px;height:12px;background:#dcd9d0"></div>
<div class="a" style="left:173.5px;top:691.5px;width:11px;height:11.5px;background:#d4d0c8;border-right:1px solid #404040;border-bottom:1px solid #404040;box-shadow:inset 1px 1px 0 #fff"></div>
<div class="a" style="left:176.5px;top:694px;width:0;height:0;border-top:3px solid transparent;border-bottom:3px solid transparent;border-right:3px solid #000"></div>
<div class="a" style="left:185px;top:691.5px;width:495.5px;height:11.5px;background:#d4d0c8;border-right:1px solid #404040;border-bottom:1px solid #404040;box-shadow:inset 1px 1px 0 #fff"></div>
<div class="a" style="left:680.5px;top:691.5px;width:29.5px;height:11.5px;background:#eceae4"></div>
<div class="a" style="left:710px;top:691.5px;width:11px;height:11.5px;background:#d4d0c8;border-right:1px solid #404040;border-bottom:1px solid #404040;box-shadow:inset 1px 1px 0 #fff"></div>
<div class="a" style="left:714.5px;top:694px;width:0;height:0;border-top:3px solid transparent;border-bottom:3px solid transparent;border-left:3px solid #000"></div>
<div class="a" style="left:722px;top:584.5px;width:1px;height:119px;background:#d8d6cf"></div>
<div class="a" style="left:726px;top:545px;width:1px;height:160px;background:#7a7a7a"></div>
<!-- status bar -->
<div class="a" style="left:3px;top:704px;width:724px;height:20px;background:#d8d5cc"></div>
<div class="t" style="left:6px;top:711px">Ready</div>
<div class="a" style="left:0;top:724px;width:727px;height:3px;background:#333"></div>
</body></html>
